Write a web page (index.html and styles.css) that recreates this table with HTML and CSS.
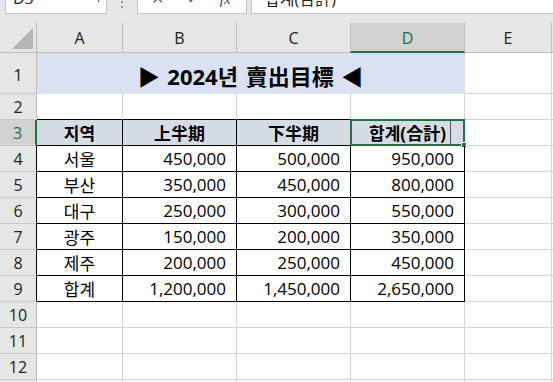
FILE: index.html
```html
<!DOCTYPE html>
<html lang="ko">
<head>
<meta charset="utf-8">
<title>Sheet</title>
<link rel="stylesheet" href="styles.css">
</head>
<body>
<div class="app">
  <div class="fbar">
    <div class="namebox"><span class="nb-text">D3</span><span class="nb-arrow"></span></div>
    <div class="grip"><i></i><i></i></div>
    <div class="fxbox">
      <span class="ico x">✕</span>
      <span class="ico ok">✓</span>
      <span class="ico fx"><i>f</i>x</span>
    </div>
    <div class="finput"><span class="ftext">합계(合計)</span></div>
  </div>

  <div class="sheet">
    <!-- column headers -->
    <div class="corner"><svg width="21" height="21" viewBox="0 0 21 21"><polygon points="21,0 21,21 0,21" fill="#b5b5b5"/></svg></div>
    <div class="ch">A</div>
    <div class="ch">B</div>
    <div class="ch">C</div>
    <div class="ch sel">D</div>
    <div class="ch">E</div>
    <div class="ch last"></div>

    <!-- row 1 -->
    <div class="rh r1">1</div>
    <div class="c title">▶ 2024년 賣出目標 ◀</div>
    <div class="c"></div>
    <div class="c"></div>

    <!-- row 2 -->
    <div class="rh">2</div>
    <div class="c tt"></div>
    <div class="c tt"></div>
    <div class="c tt"></div>
    <div class="c tt"></div>
    <div class="c"></div>
    <div class="c"></div>

    <!-- row 3 -->
    <div class="rh tbl rsel">3</div>
    <div class="c t hd ctr">지역</div>
    <div class="c t hd ctr">上半期</div>
    <div class="c t hd ctr">下半期</div>
    <div class="c t hd ctr active"><span>합계(合計)</span><span class="caret"></span><span class="selbox"><span class="handle"></span></span></div>
    <div class="c"></div>
    <div class="c"></div>

    <!-- data rows -->
    <div class="rh tbl">4</div>
    <div class="c t ctr">서울</div>
    <div class="c t num">450,000</div>
    <div class="c t num">500,000</div>
    <div class="c t num">950,000</div>
    <div class="c"></div>
    <div class="c"></div>

    <div class="rh tbl">5</div>
    <div class="c t ctr">부산</div>
    <div class="c t num">350,000</div>
    <div class="c t num">450,000</div>
    <div class="c t num">800,000</div>
    <div class="c"></div>
    <div class="c"></div>

    <div class="rh tbl">6</div>
    <div class="c t ctr">대구</div>
    <div class="c t num">250,000</div>
    <div class="c t num">300,000</div>
    <div class="c t num">550,000</div>
    <div class="c"></div>
    <div class="c"></div>

    <div class="rh tbl">7</div>
    <div class="c t ctr">광주</div>
    <div class="c t num">150,000</div>
    <div class="c t num">200,000</div>
    <div class="c t num">350,000</div>
    <div class="c"></div>
    <div class="c"></div>

    <div class="rh tbl">8</div>
    <div class="c t ctr">제주</div>
    <div class="c t num">200,000</div>
    <div class="c t num">250,000</div>
    <div class="c t num">450,000</div>
    <div class="c"></div>
    <div class="c"></div>

    <div class="rh tbl">9</div>
    <div class="c t ctr">합계</div>
    <div class="c t num">1,200,000</div>
    <div class="c t num">1,450,000</div>
    <div class="c t num">2,650,000</div>
    <div class="c"></div>
    <div class="c"></div>

    <div class="rh">10</div>
    <div class="c"></div><div class="c"></div><div class="c"></div><div class="c"></div><div class="c"></div><div class="c"></div>
    <div class="rh">11</div>
    <div class="c"></div><div class="c"></div><div class="c"></div><div class="c"></div><div class="c"></div><div class="c"></div>
    <div class="rh">12</div>
    <div class="c"></div><div class="c"></div><div class="c"></div><div class="c"></div><div class="c"></div><div class="c"></div>
    <div class="rh">13</div>
    <div class="c"></div><div class="c"></div><div class="c"></div><div class="c"></div><div class="c"></div><div class="c"></div>
  </div>
</div>
</body>
</html>
```

FILE: styles.css
```css
* { box-sizing: border-box; }
html, body { margin: 0; padding: 0; }
body {
  width: 553px;
  height: 382px;
  overflow: hidden;
  background: #ffffff;
  font-family: "Open Sans", "Noto Sans CJK KR", sans-serif;
  color: #000;
}
.app { width: 553px; height: 382px; overflow: hidden; }

/* formula bar (scrolled mostly out of view) */
.fbar {
  height: 23px;
  background: #e6e6e6;
  display: flex;
  align-items: flex-start;
  overflow: hidden;
}
.namebox {
  margin-left: 5px;
  width: 102px;
  height: 14px;
  background: #fff;
  border: 1px solid #c6c6c6;
  border-top: none;
  display: flex;
  align-items: flex-start;
  overflow: hidden;
  position: relative;
}
.nb-text {
  font-size: 16px;
  line-height: 16px;
  margin-top: -10px;
  margin-left: 7px;
  color: #222;
}
.nb-arrow {
  position: absolute;
  right: 7px;
  top: 0;
  width: 1px;
  height: 2px;
  background: #666;
}
.grip {
  width: 30px;
  height: 14px;
  display: flex;
  flex-direction: column;
  align-items: center;
  gap: 3px;
  padding-top: 1px;
}
.grip i { display: block; width: 2px; height: 2px; background: #9a9a9a; }
.fxbox {
  width: 110px;
  height: 14px;
  background: #fff;
  border: 1px solid #c6c6c6;
  border-top: none;
  display: flex;
  align-items: flex-start;
  overflow: hidden;
}
.ico {
  font-family: "DejaVu Sans", sans-serif;
  font-size: 16px;
  line-height: 16px;
  margin-top: -9px;
  color: #6a6a6a;
}
.ico.x { margin-left: 13px; }
.ico.ok { margin-left: 22px; font-weight: bold; }
.ico.fx { margin-left: 20px; font-family: "Liberation Serif", serif; font-style: italic; color: #444; font-size: 15px; }
.ico.fx i { font-style: italic; }
.finput {
  margin-left: 4px;
  flex: 1;
  height: 14px;
  background: #fff;
  border-left: 1px solid #c6c6c6;
  border-bottom: 1px solid #c6c6c6;
  display: flex;
  align-items: flex-start;
  overflow: hidden;
}
.ftext {
  font-size: 16px;
  line-height: 20px;
  margin-top: -11px;
  margin-left: 13px;
  color: #222;
}

/* sheet grid */
.sheet {
  display: grid;
  grid-template-columns: 37px 86px 114px 114px 114px 87px 1fr;
  grid-template-rows: 30px 41px repeat(12, 26px);
}
.corner {
  background: #e6e6e6;
  border-right: 1px solid #bdbdbd;
  border-bottom: 1px solid #bdbdbd;
  display: flex;
  align-items: flex-start;
  justify-content: flex-end;
  padding: 5px 3px 0 0;
}
.corner svg { display: block; }
.ch {
  background: #e6e6e6;
  border-right: 1px solid #bdbdbd;
  border-bottom: 1px solid #bdbdbd;
  display: flex;
  align-items: center;
  justify-content: center;
  font-size: 16px;
  color: #222;
  padding-top: 1px;
}
.ch.sel {
  background: #d2d2d2;
  color: #1e6b41;
  border-bottom: 2px solid #217346;
  border-left: 1px solid #bdbdbd;
  margin-left: -1px;
}
.rh {
  background: #e6e6e6;
  border-right: 1px solid #bdbdbd;
  border-bottom: 1px solid #c8c8c8;
  display: flex;
  align-items: center;
  justify-content: center;
  font-size: 16px;
  color: #222;
}
.rh.r1 { padding-top: 3px; }
.rh.tbl { border-right-color: #000; }
.rh.rsel {
  background: #d2d2d2;
  color: #1e6b41;
  border-right: 2px solid #217346;
}

.c {
  border-right: 1px solid #d4d4d4;
  border-bottom: 1px solid #d4d4d4;
  display: flex;
  align-items: center;
  font-size: 17px;
  padding: 0 4px;
  white-space: nowrap;
  position: relative;
}
.c.title {
  grid-column: span 4;
  background: #d9e1f2;
  border-right-color: #d9e1f2;
  border-bottom-color: #d9e1f2;
  justify-content: center;
  font-weight: bold;
  font-size: 22px;
  word-spacing: 2px;
  padding-top: 3px;
}
.c.tt { border-bottom-color: #000; }
.c.t { border-right-color: #000; border-bottom-color: #000; }
.c.hd { background: #d6dce4; font-weight: bold; }
.ctr { justify-content: center; }
.num { justify-content: flex-end; padding-right: 10px; }

.caret {
  position: absolute;
  left: 99px;
  top: 1px;
  width: 1px;
  height: 23px;
  background: #555;
}
.selbox {
  position: absolute;
  left: -1px;
  top: -1px;
  right: -1px;
  bottom: -1px;
  border: 2px solid #217346;
}
.handle {
  position: absolute;
  right: -4px;
  bottom: -4px;
  width: 6px;
  height: 6px;
  background: #217346;
  border: 1px solid #fff;
}
```
